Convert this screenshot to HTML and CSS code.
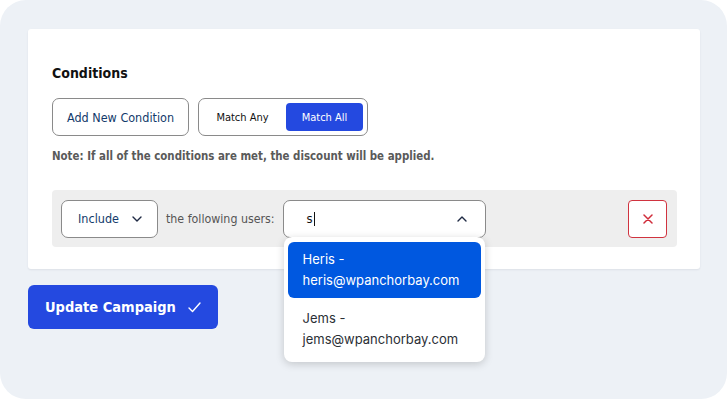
FILE: index.html
```html
<!DOCTYPE html>
<html lang="en">
<head>
  <meta charset="UTF-8" />
  <meta name="viewport" content="width=device-width, initial-scale=1.0"/>
  <title>Campaign Conditions</title>
  <link rel="stylesheet" href="styles.css">
</head>
<body>
  <div class="frame">
    <div class="card">
      <h2 class="title">Conditions</h2>

      <div class="actions">
        <button class="btnOutline">Add New Condition</button>
        <div class="toggle">
          <button class="toggleBtn">Match Any</button>
          <button class="toggleBtn active">Match All</button>
        </div>
      </div>

      <p class="note">Note: If all of the conditions are met, the discount will be applied.</p>

      <div class="conditionRow">
        <button class="select">
          Include
          <svg width="10" height="6" viewBox="0 0 10 6"><path d="M1 1l4 4 4-4" fill="none" stroke="#1f2a44" stroke-width="1.4" stroke-linecap="round" stroke-linejoin="round"/></svg>
        </button>
        <span class="label">the following users:</span>
        <div class="search">
          <div class="searchInput">
            <span class="typed">s</span><span class="caret"></span>
            <svg class="chevUp" width="10" height="6" viewBox="0 0 10 6"><path d="M1 5l4-4 4 4" fill="none" stroke="#1f2a44" stroke-width="1.4" stroke-linecap="round" stroke-linejoin="round"/></svg>
          </div>
          <ul class="menu">
            <li class="item selected">Heris -<br>heris@wpanchorbay.com</li>
            <li class="item">Jems -<br>jems@wpanchorbay.com</li>
          </ul>
        </div>
        <button class="remove">
          <svg width="10" height="10" viewBox="0 0 10 10"><path d="M1 1l8 8M9 1l-8 8" stroke="#d02c3a" stroke-width="1.5" stroke-linecap="round"/></svg>
        </button>
      </div>
    </div>

    <button class="btnPrimary">
      Update Campaign
      <svg width="13" height="11" viewBox="0 0 13 11"><path d="M1 6l3.5 3.5L12 1" fill="none" stroke="#fff" stroke-width="1.4" stroke-linecap="round" stroke-linejoin="round"/></svg>
    </button>
  </div>
</body>
</html>
```

FILE: styles.css
```css
* {
  margin: 0;
  padding: 0;
  box-sizing: border-box;
  font-family: 'DejaVu Sans Condensed', 'DejaVu Sans', sans-serif;
}

body {
  background: #ffffff;
  width: 727px;
  height: 399px;
  overflow: hidden;
}

.frame {
  height: 399px;
  background: #edf1f6;
  border-radius: 26px;
  padding: 29px 27px 0 28px;
}

.card {
  background: #fff;
  height: 240px;
  border-radius: 3px;
  box-shadow: 0 1px 2px rgba(30, 40, 60, 0.08);
  padding: 36px 23px 0 24px;
}

.title {
  font-size: 14px;
  font-weight: 700;
  color: #111;
  line-height: 16px;
}

.actions {
  display: flex;
  gap: 9px;
  margin-top: 17px;
}

.btnOutline {
  height: 38px;
  width: 137px;
  border: 1px solid #8a8a8a;
  border-radius: 7px;
  background: #fff;
  color: #123a6b;
  font-size: 12.5px;
  cursor: pointer;
}

.toggle {
  display: flex;
  align-items: center;
  height: 38px;
  width: 170px;
  border: 1px solid #8a8a8a;
  border-radius: 7px;
  padding: 4px;
  gap: 4px;
}

.toggleBtn {
  height: 28px;
  border: none;
  background: none;
  font-size: 11px;
  color: #111;
  border-radius: 4px;
  flex: 1;
  cursor: pointer;
}

.toggleBtn.active {
  background: #2449e0;
  color: #fff;
  flex: 0 0 77px;
}

.note {
  margin-top: 13px;
  font-size: 11.4px;
  font-weight: 700;
  color: #5a5a5a;
  line-height: 14px;
}

.conditionRow {
  margin-top: 27px;
  height: 57px;
  background: #eeeeee;
  border-radius: 4px;
  display: flex;
  align-items: center;
  padding: 0 10px 0 9px;
}

.select {
  display: flex;
  align-items: center;
  gap: 13px;
  height: 38px;
  width: 97px;
  padding-left: 16px;
  border: 1px solid #8a8a8a;
  border-radius: 7px;
  background: #fff;
  color: #123a6b;
  font-size: 12.5px;
}

.label {
  margin-left: 8px;
  font-size: 12.3px;
  color: #555;
}

.search {
  position: relative;
  margin-left: 8px;
  width: 203px;
}

.searchInput {
  height: 38px;
  border: 1px solid #8a8a8a;
  border-radius: 7px;
  background: #fff;
  display: flex;
  align-items: center;
  padding-left: 23px;
  font-size: 13px;
  color: #111;
}

.caret {
  width: 1px;
  height: 14px;
  background: #111;
  margin-left: 1px;
}

.chevUp {
  margin-left: auto;
  margin-right: 18px;
}

.menu {
  position: absolute;
  top: 37px;
  left: 1px;
  width: 201px;
  list-style: none;
  background: #fff;
  border-radius: 8px;
  box-shadow: 0 2px 8px rgba(0, 0, 0, 0.18);
  padding: 5px 4px 5px 4px;
  z-index: 5;
}

.item {
  font-family: Inter, 'Noto Sans', sans-serif;
  font-size: 13px;
  line-height: 21px;
  padding: 7px 15px;
  color: #2b2f36;
  border-radius: 6px;
}

.item + .item {
  margin-top: 3px;
}

.item.selected {
  background: #0058e0;
  color: #fff;
}

.remove {
  margin-left: auto;
  width: 39px;
  height: 38px;
  border: 1px solid #d0333f;
  border-radius: 4px;
  background: #fff;
  display: flex;
  align-items: center;
  justify-content: center;
  cursor: pointer;
}

.btnPrimary {
  margin-top: 16px;
  height: 44px;
  width: 190px;
  border: none;
  border-radius: 6px;
  background: #2449e0;
  color: #fff;
  font-size: 14.5px;
  font-weight: 700;
  display: flex;
  align-items: center;
  gap: 12px;
  padding-left: 17px;
  cursor: pointer;
}
```
